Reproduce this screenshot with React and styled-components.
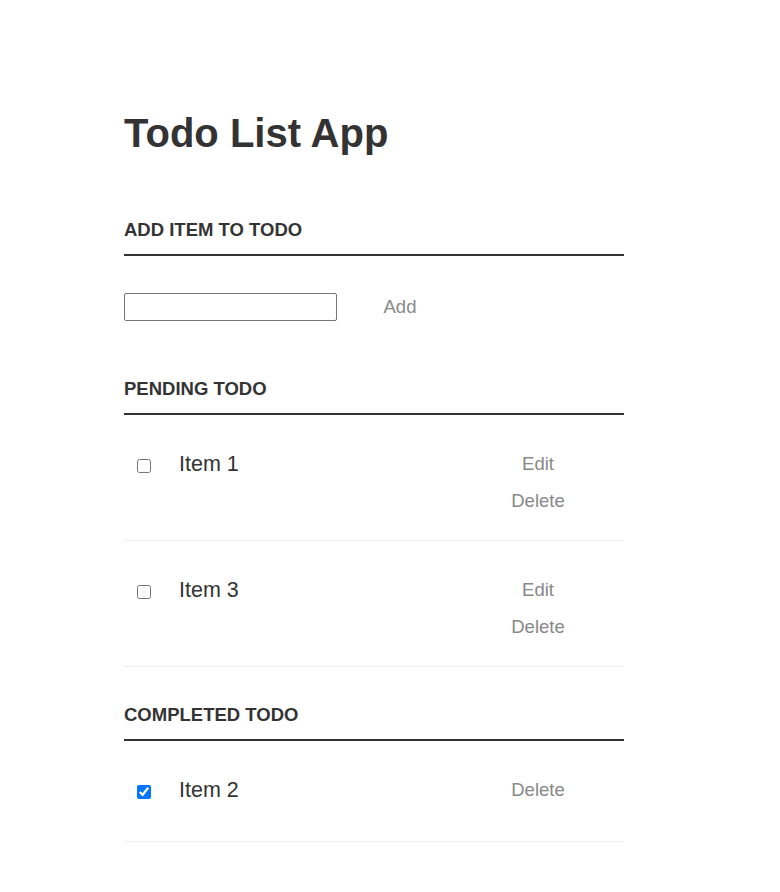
import React, { useState } from "react";
import styled, { createGlobalStyle } from "styled-components";

const Global = createGlobalStyle`
  html, body { margin: 0; padding: 0; background: #fff; }
  body {
    font-family: "Liberation Sans", Arial, Helvetica, sans-serif;
    color: #333;
  }
`;

const Page = styled.div`
  padding: 110px 0 40px 124px;
`;

const Container = styled.div`
  width: 500px;
`;

const Title = styled.h1`
  margin: 0 0 26px;
  font-size: 40px;
  line-height: 46px;
  font-weight: 700;
  color: #333;
`;

const SectionTitle = styled.h3`
  margin: 0;
  padding: 37px 0 13px;
  font-size: 18.5px;
  line-height: 22px;
  font-weight: 700;
  text-transform: uppercase;
  color: #333;
  border-bottom: 2px solid #333;
`;

const AddForm = styled.div`
  display: flex;
  align-items: center;
  padding: 37px 0 20px;
`;

const TextInput = styled.input`
  box-sizing: border-box;
  width: 213px;
  height: 28px;
  margin: 0;
  padding: 0 6px;
  border: 1px solid #767676;
  border-radius: 2px;
  font-family: inherit;
  font-size: 16px;
  outline: none;
`;

const TextButton = styled.button`
  background: none;
  border: 0;
  padding: 0;
  margin: 0;
  width: ${(p) => p.$width || "80px"};
  margin-left: ${(p) => p.$offset || "0"};
  font-family: "Liberation Sans", Arial, sans-serif;
  font-size: 18.5px;
  line-height: 20px;
  color: #888;
  text-align: center;
  cursor: pointer;
`;

const List = styled.ul`
  list-style: none;
  margin: 0;
  padding: 0;
`;

const Row = styled.li`
  display: flex;
  align-items: flex-start;
  padding: 27px 0 29px;
  border-bottom: 1px solid #eee;
`;

const Check = styled.input`
  width: 14px;
  height: 14px;
  margin: 17px 0 0 13px;
  flex: none;
`;

const Label = styled.label`
  flex: 1;
  padding-left: 28px;
  font-size: 21.5px;
  line-height: 44px;
  color: #333;
`;

const Actions = styled.div`
  display: flex;
  flex-direction: column;
  gap: 17px;
  padding-top: 12px;
  width: 80px;
  margin-right: 46px;
`;

const initial = [
  { id: 1, text: "Item 1", done: false },
  { id: 3, text: "Item 3", done: false },
  { id: 2, text: "Item 2", done: true },
];

function TodoRow({ item, onToggle }) {
  return (
    <Row>
      <Check type="checkbox" checked={item.done} onChange={onToggle} />
      <Label>{item.text}</Label>
      <Actions>
        {!item.done && <TextButton>Edit</TextButton>}
        <TextButton>Delete</TextButton>
      </Actions>
    </Row>
  );
}

export default function App() {
  const [items, setItems] = useState(initial);
  const toggle = (id) =>
    setItems((list) => list.map((i) => (i.id === id ? { ...i, done: !i.done } : i)));
  const pending = items.filter((i) => !i.done);
  const done = items.filter((i) => i.done);
  return (
    <>
      <Global />
      <Page>
        <Container>
          <Title>Todo List App</Title>
          <SectionTitle>Add Item to todo</SectionTitle>
          <AddForm>
            <TextInput type="text" />
            <TextButton $width="60px" $offset="33px">Add</TextButton>
          </AddForm>
          <SectionTitle>Pending Todo</SectionTitle>
          <List>
            {pending.map((i) => (
              <TodoRow key={i.id} item={i} onToggle={() => toggle(i.id)} />
            ))}
          </List>
          <SectionTitle>Completed Todo</SectionTitle>
          <List>
            {done.map((i) => (
              <TodoRow key={i.id} item={i} onToggle={() => toggle(i.id)} />
            ))}
          </List>
        </Container>
      </Page>
    </>
  );
}
